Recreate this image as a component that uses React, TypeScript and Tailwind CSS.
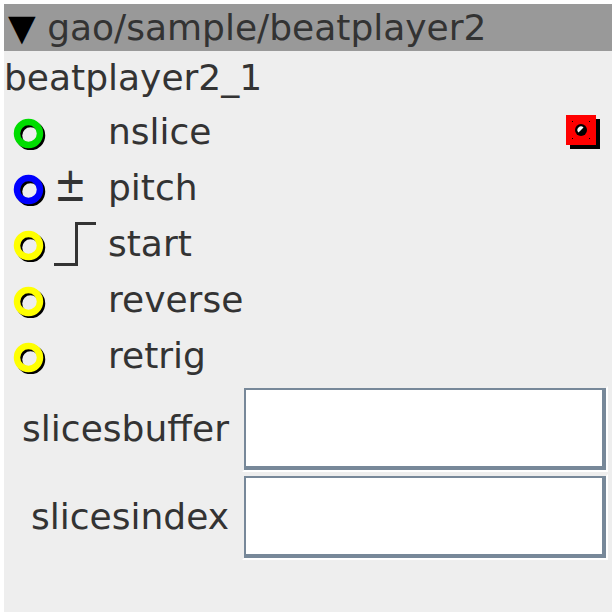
const font = { fontFamily: '"DejaVu Sans", sans-serif' };

type Port = { color: string; label: string; icon?: "pm" | "step"; toggle?: boolean };

const ports: Port[] = [
  { color: "#00dd00", label: "nslice", toggle: true },
  { color: "#0000ff", label: "pitch", icon: "pm" },
  { color: "#ffff00", label: "start", icon: "step" },
  { color: "#ffff00", label: "reverse" },
  { color: "#ffff00", label: "retrig" },
];

function Ring({ color }: { color: string }) {
  return (
    <svg width="36" height="36" viewBox="0 0 36 36" className="shrink-0">
      <circle cx="17.5" cy="21.5" r="11.5" fill="none" stroke="#000" strokeWidth="6.5" />
      <circle cx="15.5" cy="19.5" r="11.5" fill="none" stroke={color} strokeWidth="6.5" />
    </svg>
  );
}

function Toggle() {
  return (
    <svg width="34" height="34" viewBox="0 0 34 34" className="shrink-0">
      <rect x="4" y="4" width="30" height="30" fill="#000" />
      <rect x="0" y="0" width="30" height="30" fill="#ff0000" />
      <circle cx="15" cy="15" r="6" fill="#000" />
      <path d="M12.5 17.5 A3.5 3.5 0 0 1 17.5 12.5 Z" fill="#fff" />
      <rect x="6" y="6" width="1" height="1" fill="#000" />
      <rect x="23" y="6" width="1" height="1" fill="#000" />
      <rect x="6" y="23" width="1" height="1" fill="#000" />
      <rect x="23" y="23" width="1" height="1" fill="#000" />
    </svg>
  );
}

function Field({ label }: { label: string }) {
  return (
    <div className="flex h-[88px] items-center">
      <div className="w-[238px] pr-[13px] text-right text-[36px] text-[#333]">{label}</div>
      <div className="h-[86px] w-[366px] border-2 border-t-[#eeeeee] border-l-[#eeeeee] border-b-white border-r-white">
        <div className="h-full w-full border-t-2 border-l-2 border-b-4 border-r-4 border-[#778899] bg-white" />
      </div>
    </div>
  );
}

export default function App() {
  return (
    <div className="h-[616px] w-[616px] bg-white p-[4px]" style={font}>
      <div className="h-[608px] w-[608px] bg-[#eeeeee]">
        <div className="h-[47px] bg-[#999999] pl-[4px] text-[36px] leading-[47px] text-[#333]">
          <span className="text-black">▼</span> gao/sample/beatplayer2
        </div>
        <div className="h-[53px] text-[36px] leading-[53px] text-[#333]">beatplayer2_1</div>

        {ports.map((p) => (
          <div key={p.label} className="flex h-[56px] items-center pl-[9px] pr-[12px]">
            <Ring color={p.color} />
            <div className="flex h-full w-[59px] shrink-0 items-center">
              {p.icon === "pm" ? (
                <span className="ml-[5px] inline-block origin-center -translate-y-[4px] scale-y-[1.25] text-[39px] leading-none text-[#333]">±</span>
              ) : null}
              {p.icon === "step" ? (
                <svg width="59" height="56" viewBox="0 0 59 56">
                  <polyline points="5,48.5 27.5,48.5 27.5,7.5 47,7.5" fill="none" stroke="#333" strokeWidth="3" />
                </svg>
              ) : null}
            </div>
            <div className="text-[36px] text-[#333]">{p.label}</div>
            {p.toggle ? (
              <div className="ml-auto">
                <Toggle />
              </div>
            ) : null}
          </div>
        ))}

        <div className="pt-[1px]">
          <Field label="slicesbuffer" />
          <Field label="slicesindex" />
        </div>
      </div>
    </div>
  );
}
